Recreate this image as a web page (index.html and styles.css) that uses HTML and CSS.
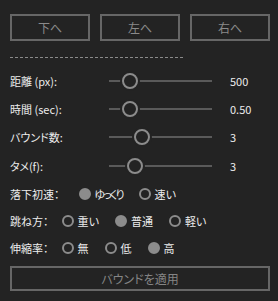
FILE: index.html
```html
<!DOCTYPE html>
<html lang="ja">
<head>
  <meta charset="UTF-8" />
  <title>バウンド</title>
  <link rel="stylesheet" href="styles.css">
</head>
<body>
  <div class="panel">
    <div class="move-row">
      <button class="btn">下へ</button>
      <button class="btn">左へ</button>
      <button class="btn">右へ</button>
    </div>

    <div class="divider"></div>

    <div class="sliders">
      <div class="slider-row">
        <span class="label">距離 (px):</span>
        <div class="track"><span class="thumb" style="left: 20%"></span></div>
        <span class="value">500</span>
      </div>
      <div class="slider-row">
        <span class="label">時間 (sec):</span>
        <div class="track"><span class="thumb" style="left: 20%"></span></div>
        <span class="value">0.50</span>
      </div>
      <div class="slider-row">
        <span class="label">バウンド数:</span>
        <div class="track"><span class="thumb" style="left: 32%"></span></div>
        <span class="value">3</span>
      </div>
      <div class="slider-row">
        <span class="label">タメ(f):</span>
        <div class="track"><span class="thumb" style="left: 25%"></span></div>
        <span class="value">3</span>
      </div>
    </div>

    <div class="radio-row">
      <span class="label wide">落下初速：</span>
      <span class="opt"><i class="dot on"></i><span class="kana">ゆっくり</span></span>
      <span class="opt"><i class="dot"></i>速い</span>
    </div>
    <div class="radio-row">
      <span class="label">跳ね方：</span>
      <span class="opt"><i class="dot"></i>重い</span>
      <span class="opt"><i class="dot on"></i>普通</span>
      <span class="opt"><i class="dot"></i>軽い</span>
    </div>
    <div class="radio-row">
      <span class="label">伸縮率：</span>
      <span class="opt"><i class="dot"></i>無</span>
      <span class="opt"><i class="dot"></i>低</span>
      <span class="opt"><i class="dot on"></i>高</span>
    </div>

    <button class="btn apply">バウンドを適用</button>
  </div>
</body>
</html>
```

FILE: styles.css
```css
body {
  margin: 0;
  background: #232323;
  color: #ececec;
  font-family: "Noto Sans CJK JP", "Noto Sans", sans-serif;
  font-size: 11px;
  font-feature-settings: "palt";
}

.panel {
  padding: 14px 8px 0 10px;
}

.move-row {
  display: flex;
  gap: 10px;
}

.btn {
  box-sizing: border-box;
  width: 80px;
  height: 27px;
  padding: 0;
  background: #232323;
  border: 2px solid #666;
  color: #8a8a8a;
  font-family: inherit;
  font-size: 12px;
  font-feature-settings: "palt";
}

.divider {
  width: 175px;
  height: 1px;
  margin-top: 16px;
  background: repeating-linear-gradient(90deg, #8a8a8a 0 3px, transparent 3px 5px);
}

.sliders {
  margin-top: 9px;
}

.slider-row {
  display: flex;
  align-items: center;
  height: 28px;
}

.slider-row:last-child {
  height: 29px;
}

.slider-row .label {
  width: 99px;
}

.track {
  position: relative;
  width: 103px;
  height: 2px;
  background: #5a5a5a;
}

.thumb {
  position: absolute;
  top: -7px;
  width: 12px;
  height: 12px;
  margin-left: -8px;
  border: 2px solid #8c8c8c;
  border-radius: 50%;
  background: #232323;
  box-shadow: 0 0 0 2px #232323;
}

.value {
  margin-left: 18px;
}

.radio-row {
  display: flex;
  align-items: center;
  height: 27px;
  font-size: 11px;
}

.radio-row .label {
  margin-right: 13px;
}

.radio-row .label.wide {
  margin-right: 19px;
}

.opt {
  display: flex;
  align-items: center;
  margin-right: 16px;
}

.kana {
  letter-spacing: -2px;
}

.dot {
  box-sizing: border-box;
  width: 12px;
  height: 12px;
  margin-right: 4px;
  border: 2px solid #8c8c8c;
  border-radius: 50%;
}

.dot.on {
  background: #8c8c8c;
}

.btn.apply {
  display: block;
  width: 260px;
  height: 25px;
  margin-top: 5px;
  color: #858585;
}
```
